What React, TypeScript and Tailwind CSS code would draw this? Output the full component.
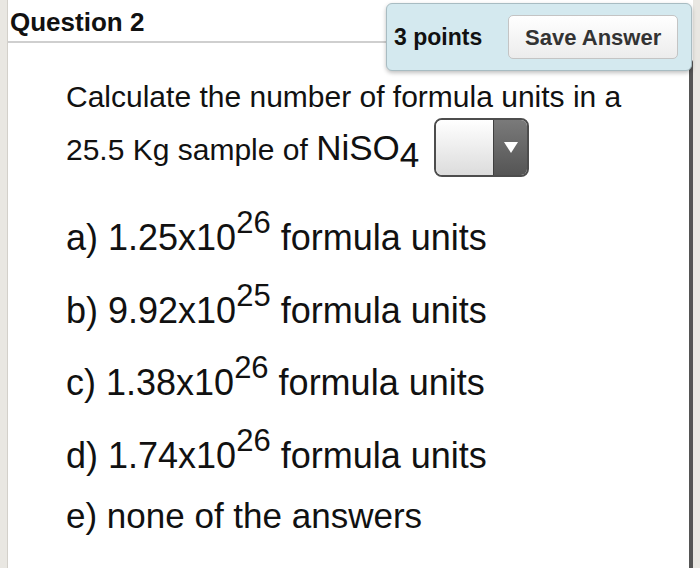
import type { ReactNode } from "react";

const FONT = { fontFamily: '"Liberation Sans", Arial, Helvetica, sans-serif' };

function Option({ label, value, exp, mt }: { label: string; value: string; exp?: string; mt: string }) {
  return (
    <div className={`${mt} h-[40px] whitespace-nowrap text-[36px] leading-[40px] text-[#111]`}>
      {label} {value}
      {exp && <span className="relative -top-[17px] text-[31px] leading-none">{exp}</span>}
      {exp ? " formula units" : ""}
    </div>
  );
}

function Select() {
  return (
    <span className="relative -top-[5px] -my-[8px] ml-[15px] inline-flex h-[59px] w-[95px] overflow-hidden rounded-[8px] border-2 border-[#4d4d4d] align-middle">
      <span className="flex-1 bg-gradient-to-b from-white to-[#dcdcdc]" />
      <span className="flex w-[34px] items-center justify-center border-l border-[#3f3f3f] bg-gradient-to-b from-[#7a7a7a] to-[#555]">
        <svg width="16" height="13" viewBox="0 0 16 13">
          <path d="M1 1h14L8 12z" fill="#fff" />
        </svg>
      </span>
    </span>
  );
}

function Row({ children }: { children: ReactNode }) {
  return <div className="whitespace-nowrap text-[30px] text-[#111]">{children}</div>;
}

export default function App() {
  return (
    <div className="flex h-[568px] w-[700px] overflow-hidden bg-white" style={FONT}>
      {/* left gutter */}
      <div className="w-[8px] shrink-0 border-r border-[#d3d0ca] bg-[#e9e7e2]" />

      <div className="relative flex-1">
        {/* header */}
        <div className="h-[43px] border-b-2 border-[#cfcfcf] pl-[2px] pt-[7px] text-[26px] font-bold leading-[30px] text-[#111]">
          Question 2
        </div>

        {/* points / save box */}
        <div className="absolute left-[378px] top-[3px] z-10 flex h-[68px] w-[306px] items-center gap-[26px] rounded-[6px] border border-[#a8bcc2] bg-[#d4e9ef] pl-[7px] shadow-[0_2px_4px_rgba(0,0,0,0.25)]">
          <span className="text-[23px] font-bold text-[#111]">3 points</span>
          <button className="h-[44px] w-[170px] rounded-[5px] border border-[#c4c4c4] bg-gradient-to-b from-white to-[#ececec] text-[22px] font-bold text-[#333]">
            Save Answer
          </button>
        </div>

        <div className="pl-[58px]">
          <div className="mt-[28px] leading-[51px]">
            <Row>Calculate the number of formula units in a</Row>
            <Row>
              25.5 Kg sample of <span className="text-[35px]">NiSO</span>
              <span className="relative top-[7px] text-[35px] leading-none">4</span>
              <Select />
            </Row>
          </div>

          <Option mt="mt-[43px]" label="a)" value="1.25x10" exp="26" />
          <Option mt="mt-[33px]" label="b)" value="9.92x10" exp="25" />
          <Option mt="mt-[32px]" label="c)" value="1.38x10" exp="26" />
          <Option mt="mt-[33px]" label="d)" value="1.74x10" exp="26" />
          <div className="mt-[20px] h-[40px] whitespace-nowrap text-[35px] leading-[40px] text-[#111]">
            e) none of the answers
          </div>
        </div>
      </div>

      {/* scrollbar */}
      <div className="flex w-[4px] shrink-0 flex-col">
        <div className="h-[60px] bg-white" />
        <div className="flex-1 rounded-t-[2px] bg-[#555]" />
      </div>
      <div className="w-[7px] shrink-0 bg-[#e9e7e2]" />
    </div>
  );
}
